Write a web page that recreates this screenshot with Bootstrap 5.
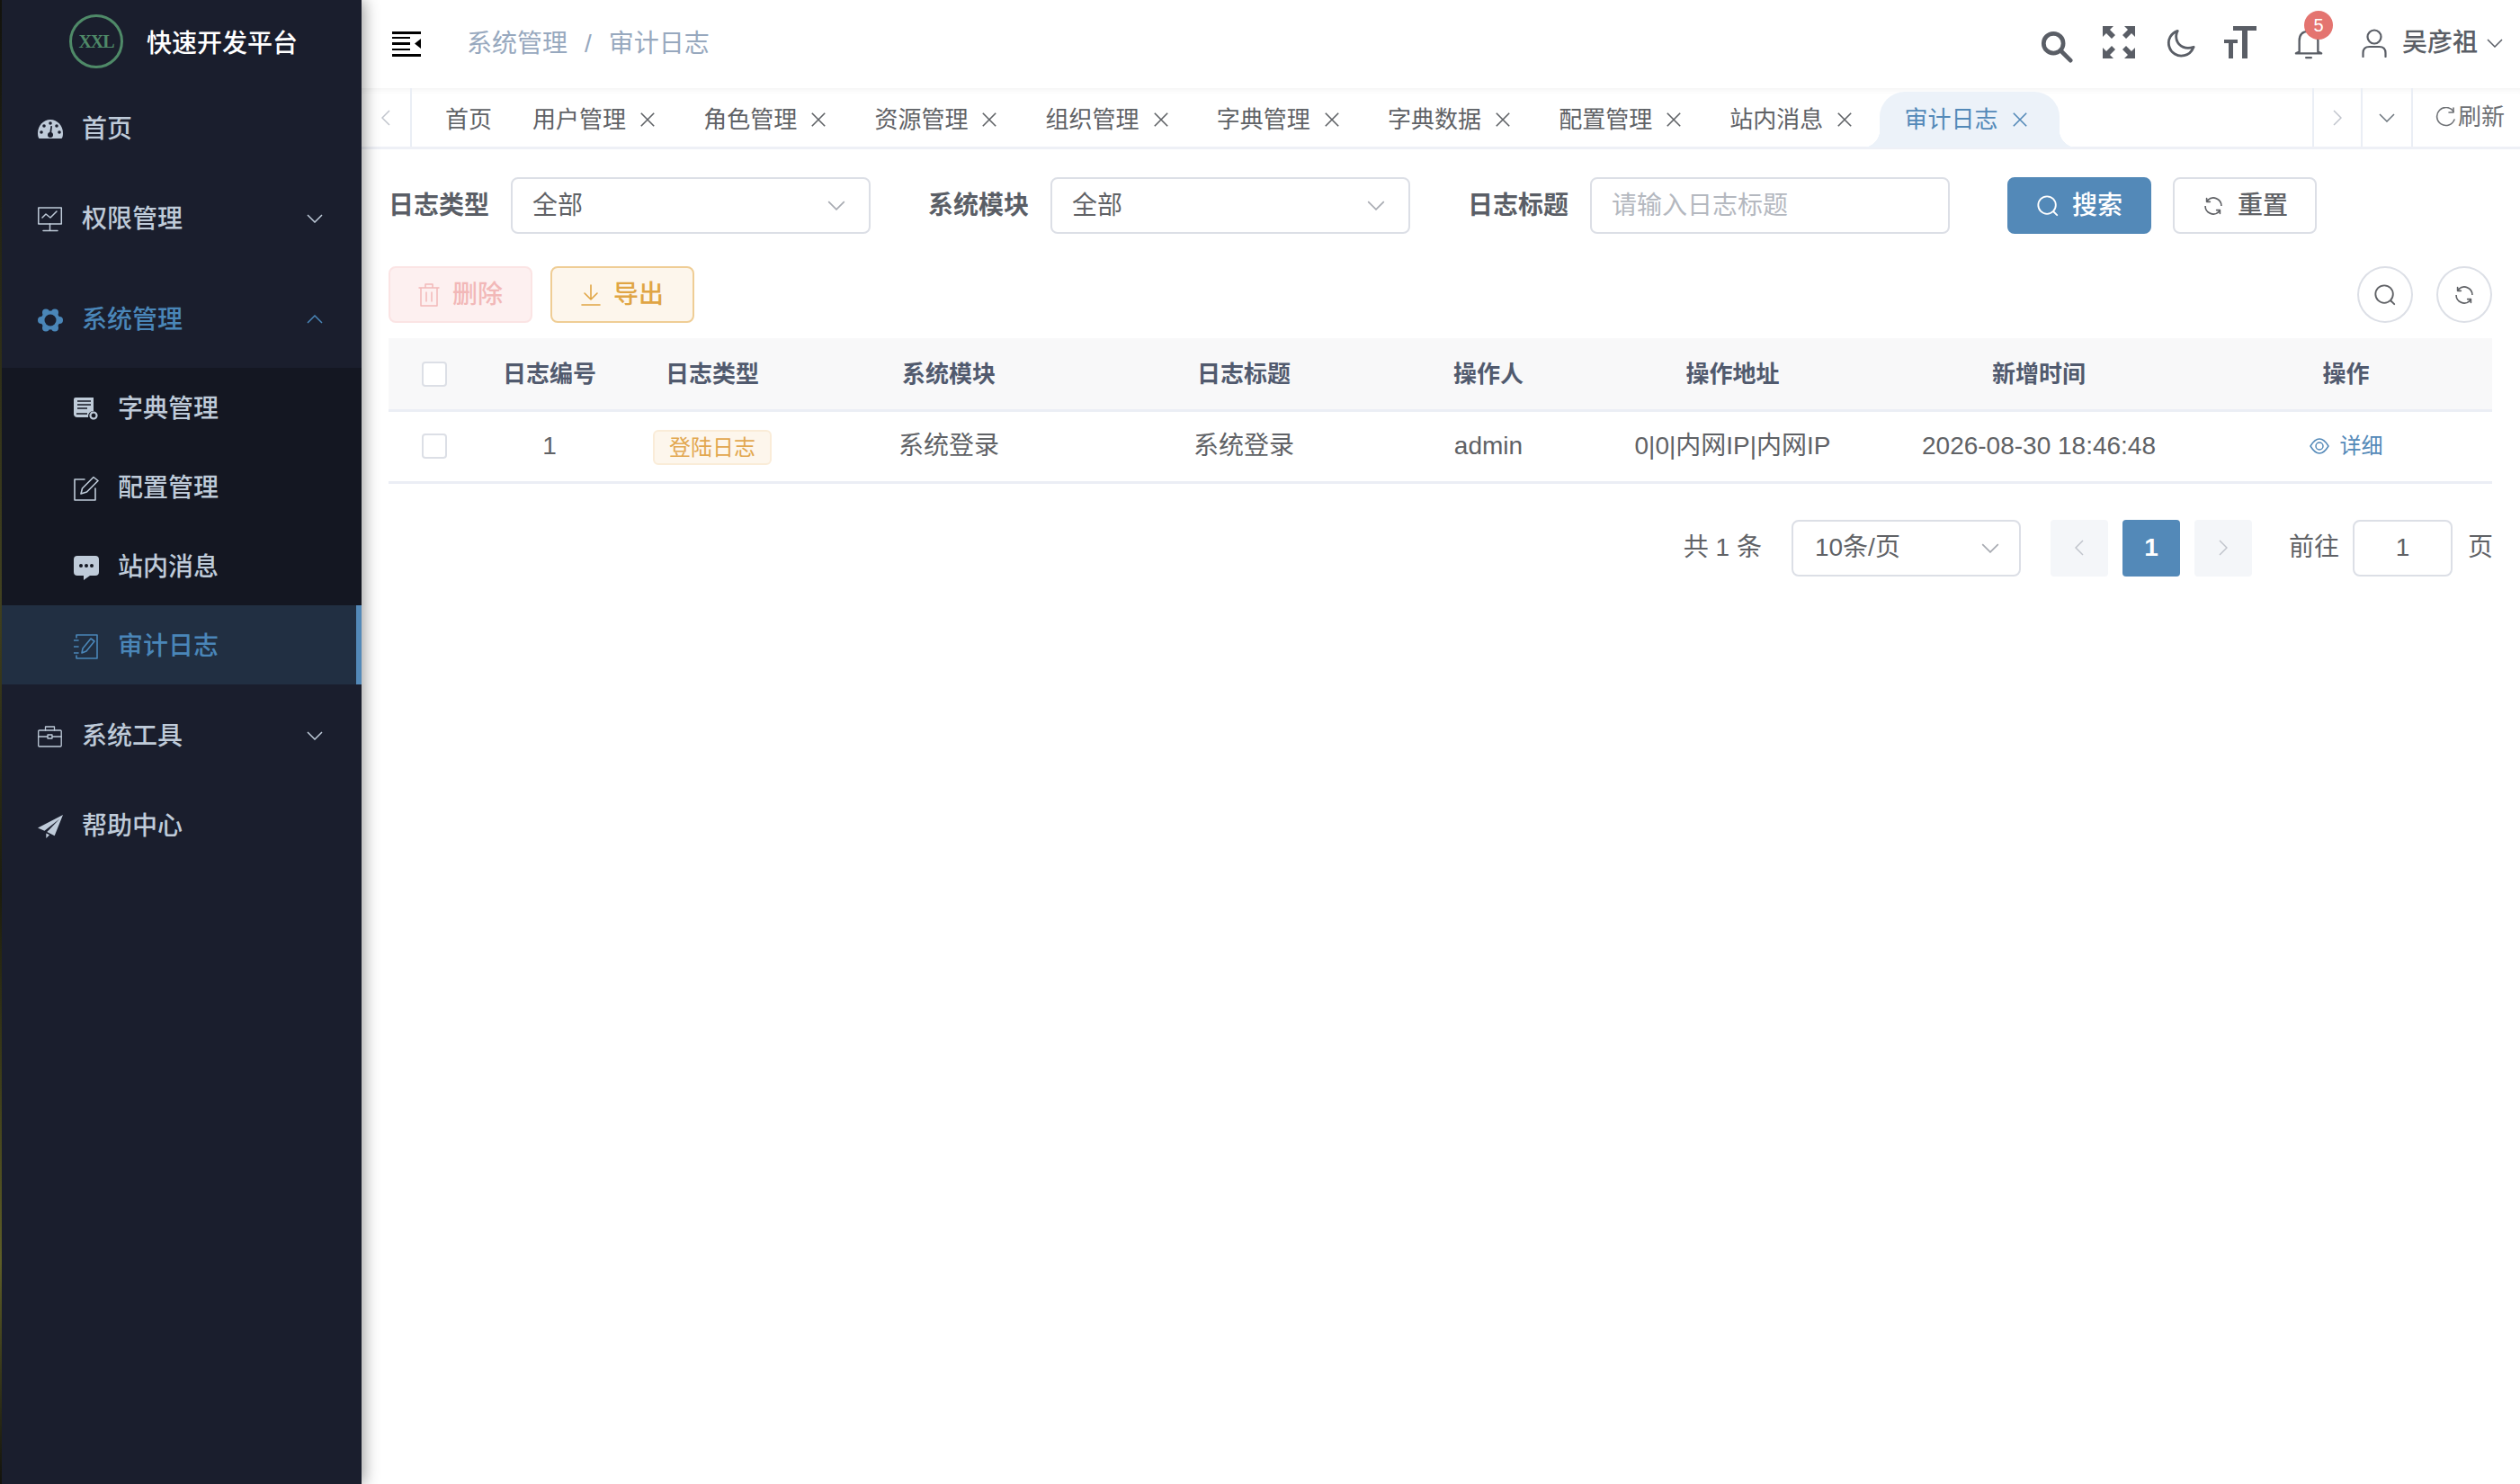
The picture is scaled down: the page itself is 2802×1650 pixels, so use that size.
<!doctype html>
<html lang="zh-CN">
<head>
<meta charset="utf-8">
<title>审计日志</title>
<link rel="stylesheet" href="https://cdn.jsdelivr.net/npm/bootstrap@5.3.0/dist/css/bootstrap.min.css">
<style>
html,body{height:100%}
body{width:2802px;height:1650px;overflow:hidden;font-family:"Liberation Sans","Noto Sans CJK SC",sans-serif;font-size:28px;color:#606266;background:#fff}
svg{display:block;flex:none}
.ic-s{fill:none;stroke:currentColor;stroke-linecap:round;stroke-linejoin:round}
.ic-f{fill:currentColor}
.edge{width:2px;background:linear-gradient(180deg,#15150f,#4a4a24 40%,#20200f 60%,#6a6a2c 85%,#15150f)}
.side{width:400px;background:#1a1e2d;color:#bfcbd9;font-weight:500;box-shadow:3px 0 16px rgba(0,0,0,.38);z-index:3}
.brand{height:92px;padding:5px 0 0 75px;gap:26px;color:#fff}
.logo-ring{width:60px;height:60px;border:3px solid #4f8a68;color:#4f8a68;font:700 20px "Liberation Serif",serif;letter-spacing:-1px;margin-top:-5px}
.mi{height:100px;padding:4px 43px 0 40px;gap:21px}
.mi-gap{margin-top:12px;margin-bottom:5px}
.mi-active{color:#4a86b8}
.mi .chev{margin:-2px 0 0 auto}
.chev-up{transform:rotate(180deg)}
.subm{background:#141722;margin-bottom:6px}
.si{height:88px;padding:4px 0 0 80px;gap:21px}
.si-active{background:#212f42;color:#4a86b8;border-right:6px solid #5389b8}
.main-col{min-width:0}
.topb{height:98px;padding:0 19px 0 34px;z-index:2}
.crumb{margin-left:51px;color:#97a8be;gap:19px}
.tool-ic{color:#5a5e66}
.t-srch{margin-top:6px}
.t-exp{margin:-4px 0 0 33px}
.t-moon{margin:-1px 0 0 35px}
.t-font{margin:-4px 0 0 32px}
.bell-wrap{width:32px;height:34px;margin:-1px 0 0 42px}
.bell-badge{top:-20px;left:11px;width:32px;height:32px;background:#e47470;color:#fff;font-size:20px}
.uname{gap:17px;margin:-3px 0 0 43px;font-weight:500;color:#5a5e66}
.uname .u-ch{margin-left:-7px}
.tabsb{height:68px;border-bottom:3px solid #eef0f6;box-shadow:inset 0 8px 8px -8px rgba(0,0,0,.08);font-size:26px;color:#5f6266}
.tab-arrow{width:56px;border-right:2px solid #eaeef5;color:#c0c4cc;flex:none}
.tab-arrow-l{border-left:2px solid #eaeef5}
.tabl{padding-left:9px;min-width:0}
.tabi{height:62px;margin-top:4px;padding:0 28px;width:190.2px;gap:15px;flex:none;white-space:nowrap}
.tabi.first{width:auto;padding-right:0;margin-right:17px}
.tabi.on{width:200px;background:#ecf2f9;color:#5389b8;border-radius:28px 28px 0 0;margin-left:4px;position:relative}
.tabi.on::before,.tabi.on::after{content:"";position:absolute;bottom:0;width:20px;height:20px}
.tabi.on::before{left:-20px;background:radial-gradient(circle at 0 0,transparent 20px,#ecf2f9 20.500px)}
.tabi.on::after{right:-20px;background:radial-gradient(circle at 100% 0,transparent 20px,#ecf2f9 20.500px)}
.refr{width:119px;padding-left:24px;color:#6e7175;gap:2px;flex:none}
.qform{padding:31px 31px 0 30px;height:94px}
.flabel{font-weight:600;color:#5a5e66;margin:0 24px 0 0;white-space:nowrap;height:63px}
.ctrl{width:400px;height:63px;border:2px solid #dcdfe6;border-radius:8px;padding:0 26px 0 22px;color:#606266;font-size:28px;background:#fff}
.ctrl:focus{border-color:#dcdfe6;box-shadow:none;color:#606266}
.ctrl::placeholder{color:#b4b8bf}
.ctrl .chev{color:#a8abb2;margin-left:auto}
.gp{margin-right:64px}
.bt{height:63px;width:160px;border-radius:8px;font-size:28px;padding:0;gap:14px;border:2px solid}
.bt-prim{background:#5389b8;border-color:#5389b8;color:#fff;font-weight:500}
.bt-plain{background:#fff;border-color:#dcdfe6;color:#606266;font-weight:500;margin-left:24px}
.bt-del{background:#fdf0f0;border-color:#fbe4e4;color:#f2b8b8;font-weight:500;opacity:1}
.bt-exp{background:#fdf6ec;border-color:#efcd95;color:#e0a544;font-weight:500;margin-left:20px}
.bt-round{width:62px;border-radius:50%;border-color:#dcdfe6;background:#fff;color:#606266;margin-left:26px}
.actions{padding:36px 31px 0 30px;height:116px}
.grid-wrap{padding:0 31px 0 30px}
.log-table{table-layout:fixed;width:2339px;margin:0;--bs-table-bg:transparent;color:#606266}
.log-table th,.log-table td{height:80px;padding:0;vertical-align:middle;text-align:center;border-bottom:3px solid #ebeef5;box-shadow:none}
.log-table th{background:#f8f8f9;color:#515a6e;font-size:26px;font-weight:600;padding-top:2px}
.log-table td{font-size:28px}
.log-table th:last-child,.log-table td:last-child{padding-left:3px}
.c1{width:98px}.c2{width:162px}.c3{width:200px}.c4{width:326px}.c5{width:330px}.c6{width:214px}.c7{width:329px}.c8{width:352px}.c9{width:328px}
.chk{width:28px;height:28px;border:2px solid #dcdfe6;border-radius:4px;background:#fff;margin:0 auto 0 37px}
.tagz{display:inline-block;height:39px;line-height:35px;padding:0 16px;font-size:24px;background:#fdf6ec;border:2px solid #faecd8;color:#e2a74f;border-radius:6px;margin-top:4px}
.lnk{color:#5389b8;font-size:24px;gap:12px;text-decoration:none;margin-top:4px}
.pager{padding:40px 30px 0 0;font-size:28px;color:#606266}
.pg-total{margin-right:33px}
.pg-size{width:255px;padding:0 22px 0 24px}
.pg-b{width:64px;height:63px;background:#f4f6f9;color:#c0c4cc;border-radius:4px;margin-left:16px}
.pg-first{margin-left:33px}
.pg-on{background:#5389b8;color:#fff;font-weight:700}
.pg-go{margin-left:41px;margin-right:15px}
.pg-in{width:111px;height:63px;padding:0;text-align:center;border:2px solid #dcdfe6;border-radius:8px;color:#606266;font-size:28px}
.pg-end{margin-left:17px}
</style>
</head>
<body class="d-flex">
<svg width="0" height="0" class="position-absolute">
<symbol id="chev" viewBox="0 0 18 10"><path d="M1 1l8 8 8-8" fill="none" stroke="currentColor" stroke-width="1.5"/></symbol>
<symbol id="x" viewBox="0 0 20 20"><path d="M2 2l16 16M18 2L2 18" fill="none" stroke="currentColor" stroke-width="1.8"/></symbol>
<symbol id="srch" viewBox="0 0 28 28"><circle cx="13" cy="13" r="10.5" fill="none" stroke="currentColor" stroke-width="2"/><path d="M21 21l4 4" stroke="currentColor" stroke-width="2" stroke-linecap="round"/></symbol>
<symbol id="ref" viewBox="0 0 1024 1024"><path fill="currentColor" d="M771.776 794.88A384 384 0 0 1 128 512h64a320 320 0 0 0 555.712 216.448H654.72a32 32 0 1 1 0-64h149.056a32 32 0 0 1 32 32v148.928a32 32 0 1 1-64 0v-50.56zM276.288 295.616h92.992a32 32 0 0 1 0 64H220.16a32 32 0 0 1-32-32V178.56a32 32 0 0 1 64 0v50.56A384 384 0 0 1 896.128 512h-64a320 320 0 0 0-555.776-216.384z"/></symbol>
</svg>
<div class="edge flex-shrink-0"></div>
<aside class="side flex-shrink-0">
  <div class="brand d-flex align-items-center">
    <div class="logo-ring rounded-circle d-flex align-items-center justify-content-center">XXL</div>
    <span>快速开发平台</span>
  </div>
  <div class="mi d-flex align-items-center">
    <svg width="28" height="24" viewBox="0 0 28 24"><path class="ic-f" d="M14 1C6 1 0 8 0 16c0 3 .5 5 1.500 6h25c1-1 1.500-3 1.500-6C28 8 22 1 14 1z"/><g fill="#1a1e2d"><circle cx="4" cy="15" r="1.800"/><circle cx="7" cy="8" r="1.800"/><circle cx="14" cy="5" r="1.800"/><circle cx="21" cy="8" r="1.800"/><circle cx="24" cy="15" r="1.800"/><circle cx="14" cy="18" r="3"/><path d="M13 17l1.500-9 1.500.3-1 9z"/></g></svg>
    <span>首页</span>
  </div>
  <div class="mi d-flex align-items-center">
    <svg width="28" height="28" viewBox="0 0 28 28" class="ic-s" stroke-width="1.500"><rect x=".8" y="1" width="25.500" height="18"/><path d="M5 12l4-4 5 4 7-7M13.500 19v7M6 26.500h16"/></svg>
    <span>权限管理</span>
    <svg class="chev" width="18" height="10"><use href="#chev"/></svg>
  </div>
  <div class="mi mi-gap mi-active d-flex align-items-center">
    <svg width="28" height="28" viewBox="0 0 28 28"><g class="ic-f"><circle cx="14" cy="14" r="10.500"/><circle cx="24" cy="14" r="4"/><circle cx="4" cy="14" r="4"/><circle cx="19" cy="5.500" r="4"/><circle cx="9" cy="5.500" r="4"/><circle cx="19" cy="22.500" r="4"/><circle cx="9" cy="22.500" r="4"/></g><circle cx="14" cy="14" r="6.500" fill="#1a1e2d"/></svg>
    <span>系统管理</span>
    <svg class="chev chev-up" width="18" height="10"><use href="#chev"/></svg>
  </div>
  <div class="subm">
    <div class="si d-flex align-items-center">
      <svg width="28" height="26" viewBox="0 0 28 26"><path class="ic-f" d="M2 0h20v15a6 6 0 0 0-6 7H4a4 4 0 0 1-4-3V2a2 2 0 0 1 2-2z"/><path d="M4 4h15M4 8h15M4 12h11M3 18h12" stroke="#141722" stroke-width="1.500"/><circle class="ic-s" cx="22" cy="20" r="3.500" stroke-width="2.200" stroke-dasharray="2 .6"/></svg>
      <span>字典管理</span>
    </div>
    <div class="si d-flex align-items-center">
      <svg width="28" height="28" viewBox="0 0 28 28" class="ic-s" stroke-width="1.600"><path d="M12 4H1v23h23V14"/><path d="M8 20l1.500-6L22 1.500l5 4L14.500 18z"/></svg>
      <span>配置管理</span>
    </div>
    <div class="si d-flex align-items-center">
      <svg width="28" height="27" viewBox="0 0 28 27"><path class="ic-f" d="M4 0h20a4 4 0 0 1 4 4v14a4 4 0 0 1-4 4h-6l-7 5v-5H4a4 4 0 0 1-4-4V4a4 4 0 0 1 4-4z"/><g fill="#141722"><circle cx="8" cy="11" r="2"/><circle cx="14" cy="11" r="2"/><circle cx="20" cy="11" r="2"/></g></svg>
      <span>站内消息</span>
    </div>
    <div class="si si-active d-flex align-items-center">
      <svg width="28" height="28" viewBox="0 0 28 28" class="ic-s" stroke-width="1.600"><path d="M3 4V1h23v26H3v-3M0 7h5M0 14h5M0 21h5"/><path d="M9 21l1-5 9-11 4 3-9 11z"/></svg>
      <span>审计日志</span>
    </div>
  </div>
  <div class="mi d-flex align-items-center">
    <svg width="28" height="24" viewBox="0 0 28 24" class="ic-s" stroke-width="1.300"><rect x=".7" y="5" width="25.500" height="18" rx="1"/><path d="M8.500 5V1h10v4M1 12h10M16 12h10"/><rect x="11" y="10" width="5" height="4"/></svg>
    <span>系统工具</span>
    <svg class="chev" width="18" height="10"><use href="#chev"/></svg>
  </div>
  <div class="mi d-flex align-items-center">
    <svg width="28" height="28" viewBox="0 0 30 28"><path class="ic-f" d="M30 0L0 15.500l8 3.500L26 5 11 20.500 20 25zM10 22v6l4-4z"/></svg>
    <span>帮助中心</span>
  </div>
</aside>
<main class="main-col flex-grow-1 d-flex flex-column">
  <header class="topb d-flex align-items-center">
    <svg width="32" height="28" viewBox="0 0 32 28" class="text-black"><path class="ic-f" d="M0 0h32v3H0zM0 12h20v3H0zM0 25h32v3H0zM0 6h20v2H0zM0 19h20v2H0zM32 8v11l-7-5.500z"/></svg>
    <nav class="crumb d-flex align-items-center"><span>系统管理</span><span>/</span><span>审计日志</span></nav>
    <div class="tool-ic ms-auto d-flex align-items-center">
      <svg class="t-srch ic-s" width="36" height="36" viewBox="0 0 38 38" stroke-width="5"><circle cx="15" cy="15" r="11.500"/><path d="M24 24l11 11"/></svg>
      <svg class="t-exp" width="36" height="36" viewBox="0 0 36 36"><path class="ic-f" d="M0 0h12L8 4l6 6-4 4-6-6-4 4zM36 0v12l-4-4-6 6-4-4 6-6-4-4zM0 36V24l4 4 6-6 4 4-6 6 4 4zM36 36H24l4-4-6-6 4-4 6 6 4-4z"/></svg>
      <svg class="t-moon ic-s" width="32" height="33" viewBox="0 0 34 34" stroke-width="3"><path d="M13 2C5 5 1 12 3 20c2 8 10 13 18 11 5-1 9-5 11-10-9 3-17 0-20-8-1-4-1-8 1-11z"/></svg>
      <svg class="t-font" width="36" height="36" viewBox="0 0 36 36"><path class="ic-f" d="M10 0h26v5H26v31h-6V5H10zM0 15h15v4h-5v17H5V19H0z"/></svg>
      <span class="bell-wrap position-relative">
        <svg width="32" height="34" viewBox="0 0 34 34" class="ic-s" stroke-width="2.500"><path d="M6 26V13C6 6 10 2 17 2s11 4 11 11v13l4 2H2zM14 33h6"/></svg>
        <span class="bell-badge position-absolute rounded-circle d-flex align-items-center justify-content-center">5</span>
      </span>
      <span class="uname d-flex align-items-center">
        <svg width="28" height="32" viewBox="0 0 28 32" class="ic-s" stroke-width="2.200"><circle cx="14" cy="9" r="7.500"/><path d="M1.500 31v-4c0-5 3-7 7-7h11c4 0 7 2 7 7v4"/></svg>
        <span>吴彦祖</span>
        <svg class="u-ch" width="18" height="10"><use href="#chev"/></svg>
      </span>
    </div>
  </header>
  <div class="tabsb d-flex">
    <div class="tab-arrow d-flex align-items-center justify-content-center"><svg width="10" height="18" viewBox="0 0 10 18"><path d="M9 1L1 9l8 8" fill="none" stroke="currentColor" stroke-width="1.500"/></svg></div>
    <div class="tabl d-flex flex-grow-1">
      <div class="tabi first d-flex align-items-center">首页</div>
      <div class="tabi d-flex align-items-center"><span>用户管理</span><svg width="18" height="18"><use href="#x"/></svg></div>
      <div class="tabi d-flex align-items-center"><span>角色管理</span><svg width="18" height="18"><use href="#x"/></svg></div>
      <div class="tabi d-flex align-items-center"><span>资源管理</span><svg width="18" height="18"><use href="#x"/></svg></div>
      <div class="tabi d-flex align-items-center"><span>组织管理</span><svg width="18" height="18"><use href="#x"/></svg></div>
      <div class="tabi d-flex align-items-center"><span>字典管理</span><svg width="18" height="18"><use href="#x"/></svg></div>
      <div class="tabi d-flex align-items-center"><span>字典数据</span><svg width="18" height="18"><use href="#x"/></svg></div>
      <div class="tabi d-flex align-items-center"><span>配置管理</span><svg width="18" height="18"><use href="#x"/></svg></div>
      <div class="tabi d-flex align-items-center"><span>站内消息</span><svg width="18" height="18"><use href="#x"/></svg></div>
      <div class="tabi on d-flex align-items-center"><span>审计日志</span><svg width="18" height="18"><use href="#x"/></svg></div>
    </div>
    <div class="tab-arrow tab-arrow-l d-flex align-items-center justify-content-center"><svg width="10" height="18" viewBox="0 0 10 18"><path d="M1 1l8 8-8 8" fill="none" stroke="currentColor" stroke-width="1.500"/></svg></div>
    <div class="tab-arrow d-flex align-items-center justify-content-center text-secondary"><svg width="18" height="10"><use href="#chev"/></svg></div>
    <div class="refr d-flex align-items-center"><svg width="24" height="24" viewBox="0 0 24 24" class="ic-s" stroke-width="1.600"><path d="M21 5A10 10 0 1 0 22 14"/><path d="M21 1v5h-5"/></svg><span>刷新</span></div>
  </div>
  <form class="qform d-flex align-items-start">
    <label class="flabel d-flex align-items-center">日志类型</label>
    <div class="ctrl gp d-flex align-items-center"><span>全部</span><svg class="chev" width="20" height="11"><use href="#chev"/></svg></div>
    <label class="flabel d-flex align-items-center">系统模块</label>
    <div class="ctrl gp d-flex align-items-center"><span>全部</span><svg class="chev" width="20" height="11"><use href="#chev"/></svg></div>
    <label class="flabel d-flex align-items-center">日志标题</label>
    <input class="form-control ctrl gp" placeholder="请输入日志标题">
    <button type="button" class="btn bt bt-prim d-flex align-items-center justify-content-center"><svg width="26" height="26"><use href="#srch"/></svg>搜索</button>
    <button type="button" class="btn bt bt-plain d-flex align-items-center justify-content-center"><svg width="26" height="26"><use href="#ref"/></svg>重置</button>
  </form>
  <div class="actions d-flex align-items-start">
    <button type="button" class="btn bt bt-del d-flex align-items-center justify-content-center"><svg width="24" height="26" viewBox="0 0 24 26" class="ic-s" stroke-width="1.500"><path d="M1 5h22M8 5V1h8v4M3 5v20h18V5M9 10v10M15 10v10"/></svg>删除</button>
    <button type="button" class="btn bt bt-exp d-flex align-items-center justify-content-center"><svg width="22" height="24" viewBox="0 0 22 24" class="ic-s" stroke-width="1.600"><path d="M11 1v16M4 10l7 7 7-7M1 23h20"/></svg>导出</button>
    <button type="button" class="btn bt bt-round ms-auto d-flex align-items-center justify-content-center"><svg width="26" height="26"><use href="#srch"/></svg></button>
    <button type="button" class="btn bt bt-round d-flex align-items-center justify-content-center"><svg width="26" height="26"><use href="#ref"/></svg></button>
  </div>
  <div class="grid-wrap">
    <table class="table log-table">
      <colgroup><col class="c1"><col class="c2"><col class="c3"><col class="c4"><col class="c5"><col class="c6"><col class="c7"><col class="c8"><col class="c9"></colgroup>
      <thead><tr><th><div class="chk"></div></th><th>日志编号</th><th>日志类型</th><th>系统模块</th><th>日志标题</th><th>操作人</th><th>操作地址</th><th>新增时间</th><th>操作</th></tr></thead>
      <tbody><tr><td><div class="chk"></div></td><td>1</td><td><span class="tagz">登陆日志</span></td><td>系统登录</td><td>系统登录</td><td>admin</td><td>0|0|内网IP|内网IP</td><td>2026-08-30 18:46:48</td><td><a href="#" class="lnk d-inline-flex align-items-center"><svg width="22" height="22" viewBox="0 0 22 22" class="ic-s" stroke-width="1.500"><path d="M1 11c3-5 6-8 10-8s7 3 10 8c-3 5-6 8-10 8s-7-3-10-8z"/><circle cx="11" cy="11" r="4"/></svg>详细</a></td></tr></tbody>
    </table>
  </div>
  <div class="pager d-flex align-items-center justify-content-end">
    <span class="pg-total">共 1 条</span>
    <div class="ctrl pg-size d-flex align-items-center"><span>10条/页</span><svg class="chev" width="20" height="11"><use href="#chev"/></svg></div>
    <div class="pg-b pg-first d-flex align-items-center justify-content-center"><svg width="10" height="18" viewBox="0 0 10 18"><path d="M9 1L1 9l8 8" fill="none" stroke="currentColor" stroke-width="1.500"/></svg></div>
    <div class="pg-b pg-on d-flex align-items-center justify-content-center">1</div>
    <div class="pg-b d-flex align-items-center justify-content-center"><svg width="10" height="18" viewBox="0 0 10 18"><path d="M1 1l8 8-8 8" fill="none" stroke="currentColor" stroke-width="1.500"/></svg></div>
    <span class="pg-go">前往</span>
    <input class="form-control pg-in" value="1">
    <span class="pg-end">页</span>
  </div>
</main>
</body>
</html>
